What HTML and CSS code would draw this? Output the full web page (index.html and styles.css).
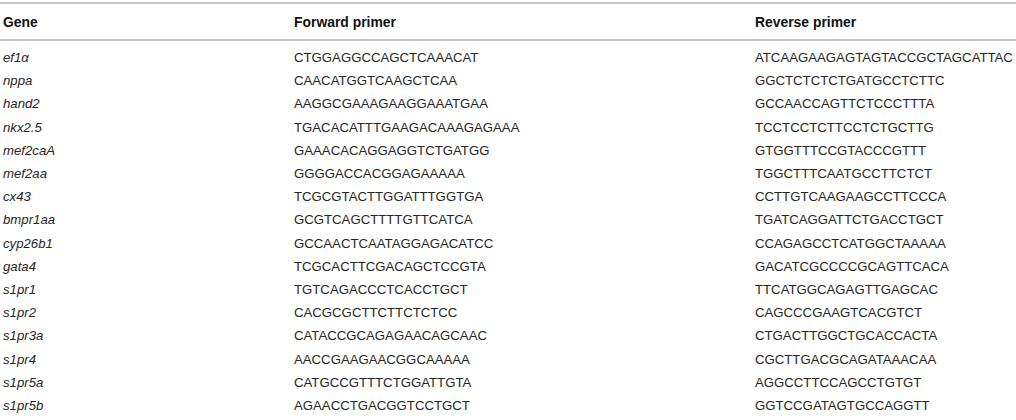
FILE: index.html
```html
<!DOCTYPE html>
<html>
<head>
<meta charset="utf-8">
<link rel="stylesheet" href="styles.css">
</head>
<body>
<table class="primers">
  <thead>
    <tr><th class="c-gene">Gene</th><th class="c-fwd">Forward primer</th><th class="c-rev">Reverse primer</th></tr>
  </thead>
  <tbody>
    <tr class="first"><td><i>ef1α</i></td><td>CTGGAGGCCAGCTCAAACAT</td><td>ATCAAGAAGAGTAGTACCGCTAGCATTAC</td></tr>
    <tr><td><i>nppa</i></td><td>CAACATGGTCAAGCTCAA</td><td>GGCTCTCTCTGATGCCTCTTC</td></tr>
    <tr><td><i>hand2</i></td><td>AAGGCGAAAGAAGGAAATGAA</td><td>GCCAACCAGTTCTCCCTTTA</td></tr>
    <tr><td><i>nkx2.5</i></td><td>TGACACATTTGAAGACAAAGAGAAA</td><td>TCCTCCTCTTCCTCTGCTTG</td></tr>
    <tr><td><i>mef2caA</i></td><td>GAAACACAGGAGGTCTGATGG</td><td>GTGGTTTCCGTACCCGTTT</td></tr>
    <tr><td><i>mef2aa</i></td><td>GGGGACCACGGAGAAAAA</td><td>TGGCTTTCAATGCCTTCTCT</td></tr>
    <tr><td><i>cx43</i></td><td>TCGCGTACTTGGATTTGGTGA</td><td>CCTTGTCAAGAAGCCTTCCCA</td></tr>
    <tr><td><i>bmpr1aa</i></td><td>GCGTCAGCTTTTGTTCATCA</td><td>TGATCAGGATTCTGACCTGCT</td></tr>
    <tr><td><i>cyp26b1</i></td><td>GCCAACTCAATAGGAGACATCC</td><td>CCAGAGCCTCATGGCTAAAAA</td></tr>
    <tr><td><i>gata4</i></td><td>TCGCACTTCGACAGCTCCGTA</td><td>GACATCGCCCCGCAGTTCACA</td></tr>
    <tr><td><i>s1pr1</i></td><td>TGTCAGACCCTCACCTGCT</td><td>TTCATGGCAGAGTTGAGCAC</td></tr>
    <tr><td><i>s1pr2</i></td><td>CACGCGCTTCTTCTCTCC</td><td>CAGCCCGAAGTCACGTCT</td></tr>
    <tr><td><i>s1pr3a</i></td><td>CATACCGCAGAGAACAGCAAC</td><td>CTGACTTGGCTGCACCACTA</td></tr>
    <tr><td><i>s1pr4</i></td><td>AACCGAAGAACGGCAAAAA</td><td>CGCTTGACGCAGATAAACAA</td></tr>
    <tr><td><i>s1pr5a</i></td><td>CATGCCGTTTCTGGATTGTA</td><td>AGGCCTTCCAGCCTGTGT</td></tr>
    <tr><td><i>s1pr5b</i></td><td>AGAACCTGACGGTCCTGCT</td><td>GGTCCGATAGTGCCAGGTT</td></tr>
  </tbody>
</table>
</body>
</html>
```
FILE: styles.css
```css
html, body {
  margin: 0;
  padding: 0;
  background: #fff;
}
body {
  padding-top: 2px;
  font-family: "Liberation Sans", Arial, sans-serif;
  font-size: 13.2px;
  color: #262626;
}
.primers {
  width: 1016px;
  border-collapse: collapse;
  table-layout: fixed;
}
.primers th {
  text-align: left;
  font-weight: bold;
  font-size: 13.9px;
  color: #111;
  height: 35px;
  padding: 0 0 0 3px;
  border-top: 2px solid #c4c4c4;
  border-bottom: 2px solid #c4c4c4;
  vertical-align: middle;
}
.primers .c-gene { width: 288px; }
.primers .c-fwd { width: 458px; }
.primers .c-rev { width: auto; }
.primers td {
  padding: 0 0 0 3px;
  height: 23.2px;
  line-height: 15px;
  vertical-align: middle;
  white-space: nowrap;
}
.primers i {
  font-style: italic;
}
.primers tr.first td {
  padding-top: 5px;
}
```
